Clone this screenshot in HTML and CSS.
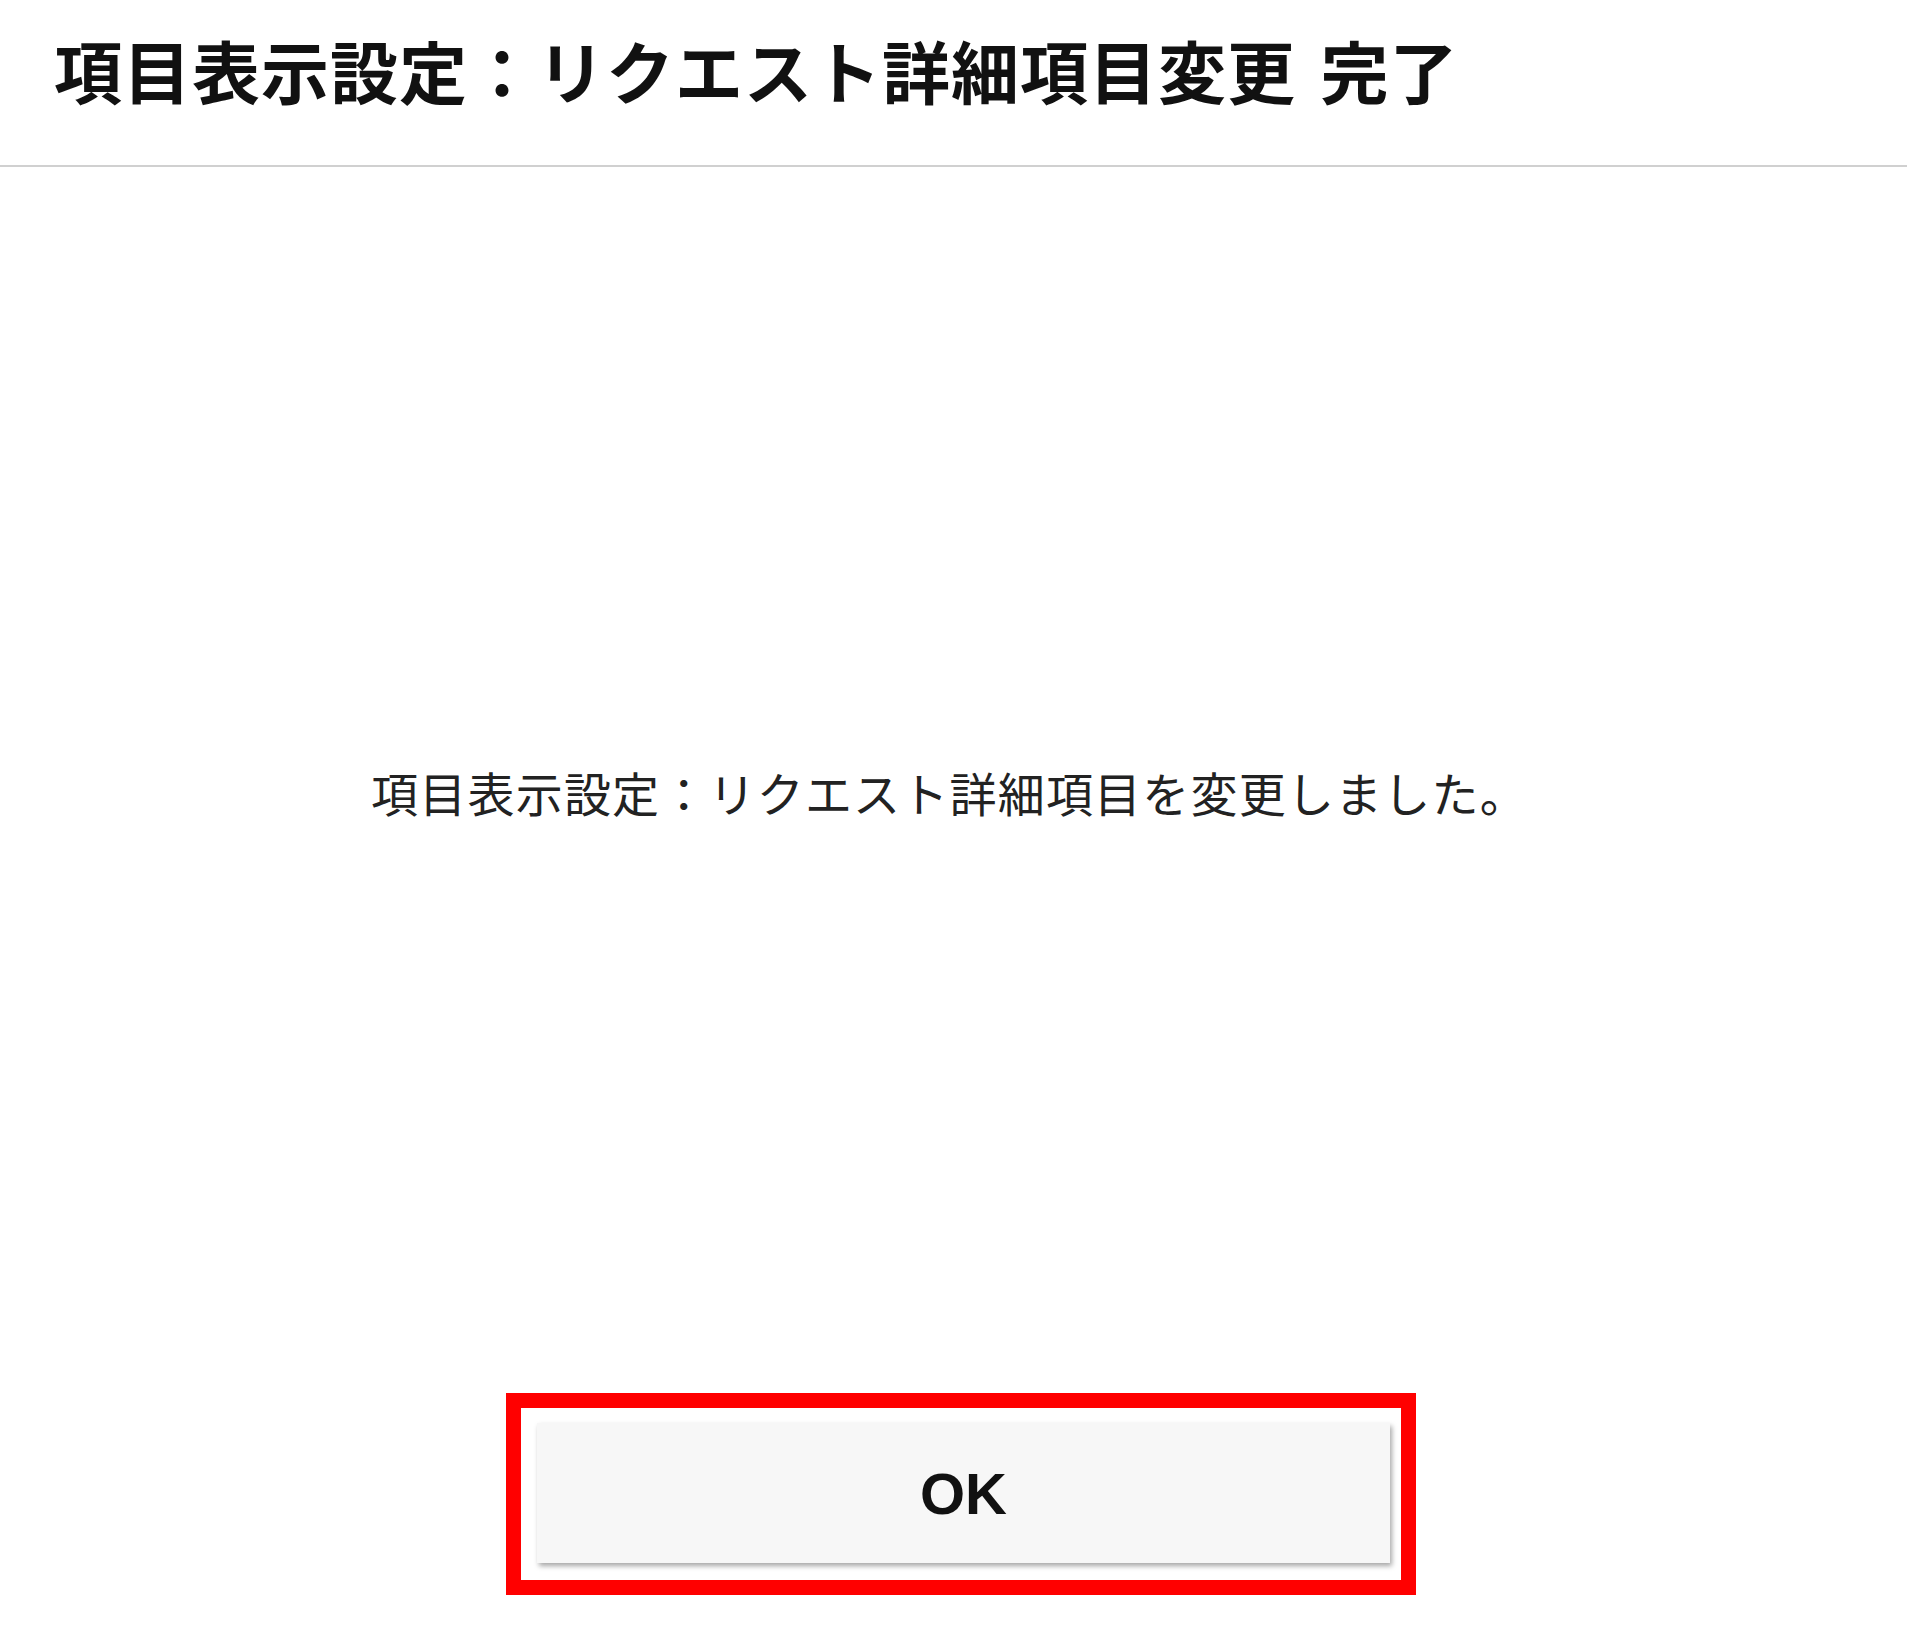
FILE: index.html
```html
<!doctype html>
<html lang="ja">
<head>
  <meta charset="utf-8">
  <title>項目表示設定：リクエスト詳細項目変更 完了</title>
  <link rel="stylesheet" href="styles.css">
</head>
<body>

<!-- header: page title -->
<header class="page-header">
  <h1 class="page-title">項目表示設定：リクエスト詳細項目変更 完了</h1>
</header>

<!-- body: result message + OK -->
<main class="page-body">
  <p class="message">項目表示設定：リクエスト詳細項目を変更しました。</p>

  <div class="actions">
    <div class="highlight">
      <button class="ok-btn" type="button">OK</button>
    </div>
  </div>
</main>

</body>
</html>
```

FILE: styles.css
```css
body {
  margin: 0;
  background: #ffffff;
  color: #111;
  font-family: "Noto Sans CJK JP", "Noto Sans", sans-serif;
}

.page-header {
  padding: 36px 0 61px 54px;
  border-bottom: 2px solid #d0d0d0;
}

.page-title {
  margin: 0;
  font-size: 68px;
  line-height: 68px;
  font-weight: 700;
  letter-spacing: 1px;
  word-spacing: 8px;
  color: #111;
  white-space: nowrap;
}

.page-body {
  display: flex;
  flex-direction: column;
}

.message {
  margin: 601px 0 0 0;
  padding-right: 8px;
  text-align: center;
  font-size: 47px;
  line-height: 47px;
  font-weight: 400;
  letter-spacing: 1.2px;
  color: #222;
}

.actions {
  display: flex;
  justify-content: center;
  margin-top: 578px;
  padding-left: 15px;
}

/* red annotation frame round the button */
.highlight {
  border: 15px solid #ff0000;
  padding: 15px 11px 17px 16px;
  background: #ffffff;
}

.ok-btn {
  display: block;
  width: 853px;
  height: 140px;
  border: none;
  border-radius: 0;
  background-color: #f7f7f7;
  box-shadow: 2px 3px 5px rgba(0, 0, 0, 0.35);
  font-family: "Liberation Sans", Arial, sans-serif;
  font-weight: 700;
  font-size: 58px;
  color: #111;
  cursor: pointer;
}
```
